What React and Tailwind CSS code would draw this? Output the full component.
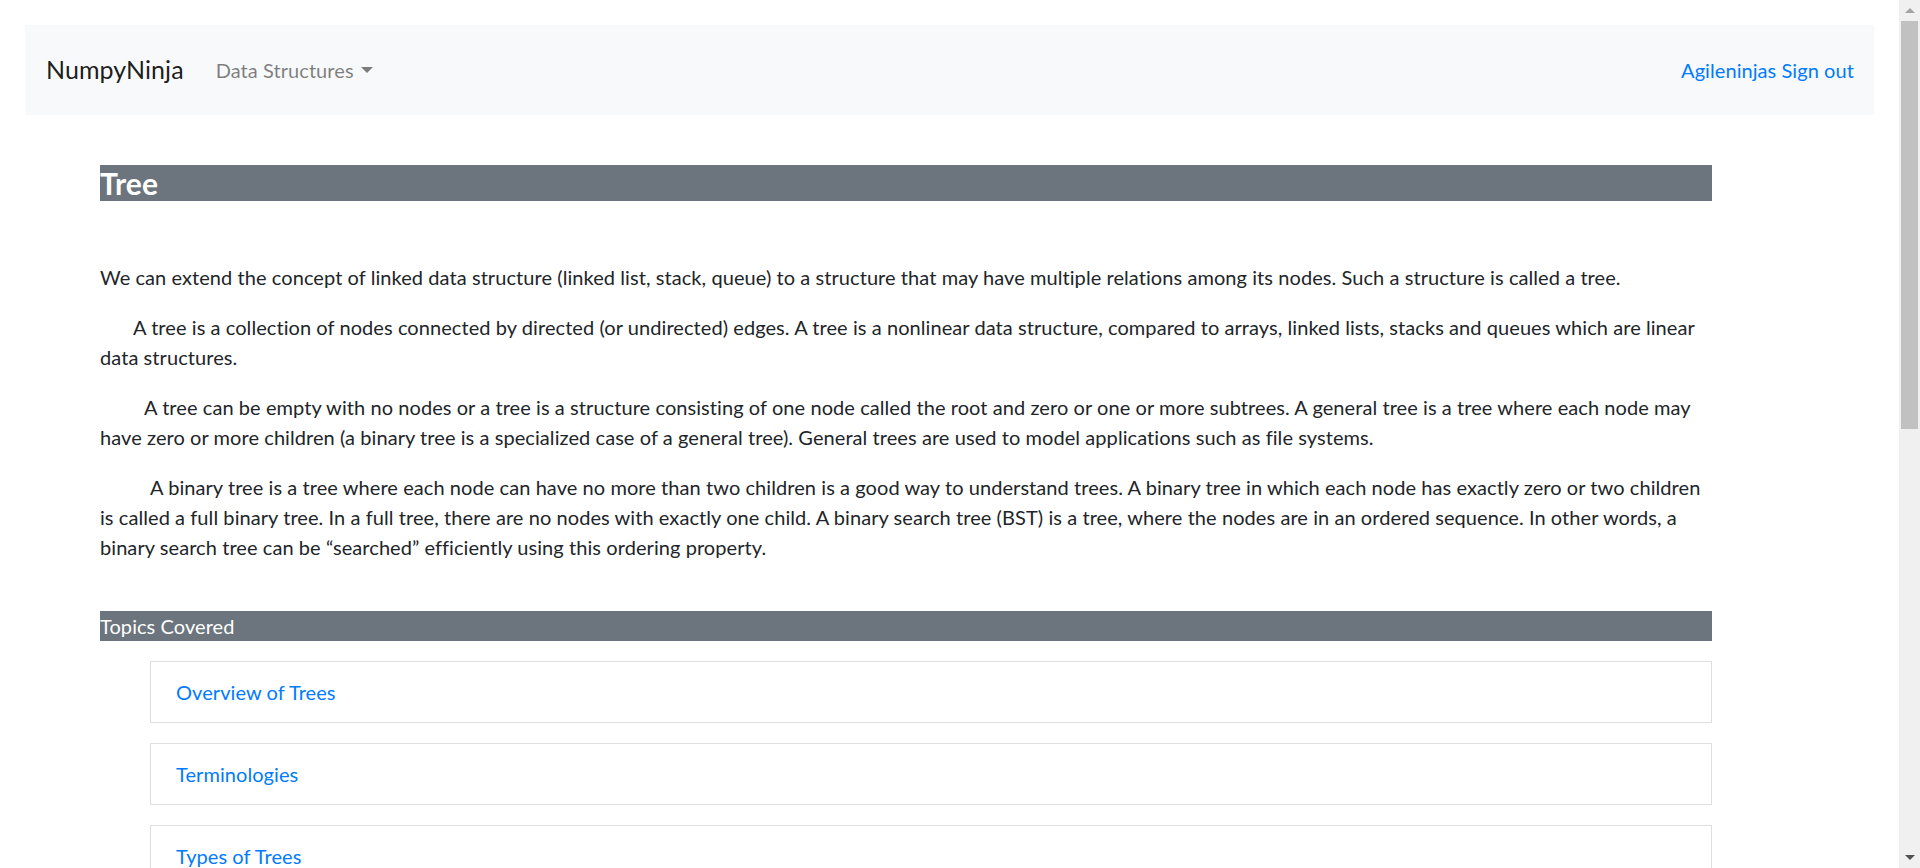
import React from 'react';

const topics = ['Overview of Trees', 'Terminologies', 'Types of Trees', 'Tree Traversals', 'Traversals-Illustration', 'Binary Trees'];

function Para({ indent, lines }) {
  return (
    <p className={`mb-[20px] whitespace-nowrap ${indent}`}>
      {lines.map((l, i) => (
        <React.Fragment key={i}>
          {l}
          {i < lines.length - 1 && <br />}
        </React.Fragment>
      ))}
    </p>
  );
}

export default function App() {
  return (
    <div
      className="flex h-screen overflow-hidden bg-white text-[#212529] tracking-[0.07px]"
      style={{ fontFamily: 'Lato, "Open Sans", sans-serif' }}
    >
      <div className="flex-1 overflow-hidden">
        {/* navbar */}
        <nav className="mx-[25px] mt-[25px] h-[90px] bg-[#f8f9fa] flex items-center justify-between pl-[21px] pr-[20px]">
          <div className="flex items-center">
            <span className="text-[25px] text-black/90">NumpyNinja</span>
            <span className="ml-[32px] text-[20px] text-black/50 flex items-center">
              Data Structures
              <span className="ml-[7px] w-0 h-0 border-l-[6px] border-r-[6px] border-t-[6px] border-l-transparent border-r-transparent border-t-black/50"></span>
            </span>
          </div>
          <a className="text-[20px] text-[#007bff]">Agileninjas Sign out</a>
        </nav>

        <div className="ml-[100px] w-[1612px]">
          <h4 className="mt-[50px] bg-[#6c757d] text-white text-[30px] font-bold leading-[36px]">Tree</h4>

          <div className="mt-[61px] text-[20px] leading-[30px]">
            <Para
              indent=""
              lines={[
                'We can extend the concept of linked data structure (linked list, stack, queue) to a structure that may have multiple relations among its nodes. Such a structure is called a tree.',
              ]}
            />
            <Para
              indent="indent-[33px]"
              lines={[
                'A tree is a collection of nodes connected by directed (or undirected) edges. A tree is a nonlinear data structure, compared to arrays, linked lists, stacks and queues which are linear',
                'data structures.',
              ]}
            />
            <Para
              indent="indent-[44px]"
              lines={[
                'A tree can be empty with no nodes or a tree is a structure consisting of one node called the root and zero or one or more subtrees. A general tree is a tree where each node may',
                'have zero or more children (a binary tree is a specialized case of a general tree). General trees are used to model applications such as file systems.',
              ]}
            />
            <Para
              indent="indent-[50px]"
              lines={[
                'A binary tree is a tree where each node can have no more than two children is a good way to understand trees. A binary tree in which each node has exactly zero or two children',
                'is called a full binary tree. In a full tree, there are no nodes with exactly one child. A binary search tree (BST) is a tree, where the nodes are in an ordered sequence. In other words, a',
                'binary search tree can be \u201csearched\u201d efficiently using this ordering property.',
              ]}
            />
          </div>

          <h5 className="mt-[49px] bg-[#6c757d] text-white text-[20px] leading-[30px]">Topics Covered</h5>

          <ul className="pl-[50px] mt-[20px]">
            {topics.map((t) => (
              <li key={t} className="mb-[20px] border border-[#dfdfdf] px-[25px] py-[15px] text-[20px] leading-[30px]">
                <a className="text-[#007bff]">{t}</a>
              </li>
            ))}
          </ul>
        </div>
      </div>

      {/* scrollbar */}
      <div className="w-[21px] bg-[#f0f0f0] flex flex-col items-center">
        <div className="h-[21px] flex items-center justify-center">
          <span className="w-0 h-0 border-l-[5px] border-r-[5px] border-b-[5px] border-l-transparent border-r-transparent border-b-[#a3a3a3]"></span>
        </div>
        <div className="w-[17px] h-[408px] bg-[#c1c1c1]"></div>
        <div className="flex-1"></div>
        <div className="h-[21px] flex items-center justify-center">
          <span className="w-0 h-0 border-l-[5px] border-r-[5px] border-t-[5px] border-l-transparent border-r-transparent border-t-[#505050]"></span>
        </div>
      </div>
    </div>
  );
}
